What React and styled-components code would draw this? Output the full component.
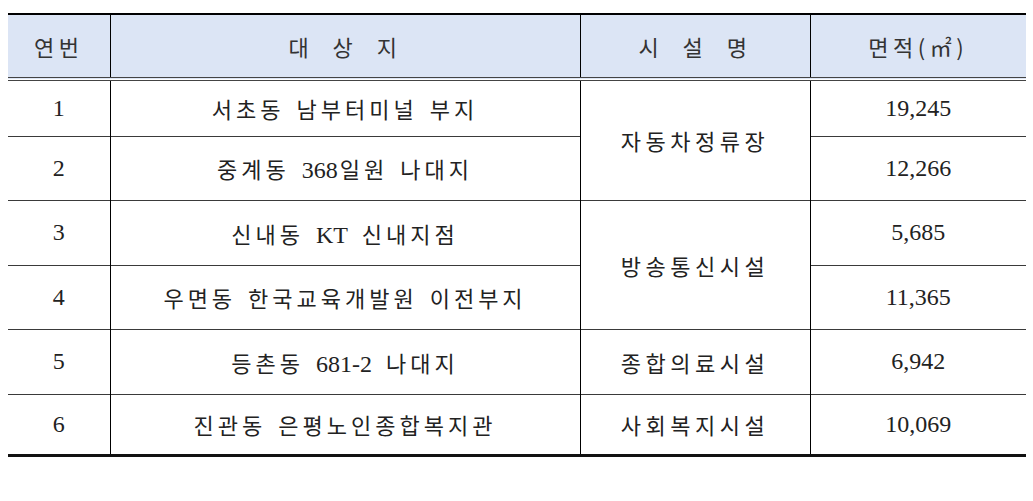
import React from 'react';
import styled, { createGlobalStyle } from 'styled-components';

const GlobalStyle = createGlobalStyle`
  html, body {
    margin: 0;
    padding: 0;
    background: #ffffff;
  }
  body {
    padding: 13px 8px 0 8px;
  }
`;

const sites = [
  { no: '1', name: '서초동 남부터미널 부지', facility: '자동차정류장', span: 2, area: '19,245', height: 57 },
  { no: '2', name: '중계동 368일원 나대지', area: '12,266', height: 64 },
  { no: '3', name: '신내동 KT 신내지점', facility: '방송통신시설', span: 2, area: '5,685', height: 65 },
  { no: '4', name: '우면동 한국교육개발원 이전부지', area: '11,365', height: 64 },
  { no: '5', name: '등촌동 681-2 나대지', facility: '종합의료시설', span: 1, area: '6,942', height: 65 },
  { no: '6', name: '진관동 은평노인종합복지관', facility: '사회복지시설', span: 1, area: '10,069', height: 61 },
];

const Table = styled.table`
  width: 1018px;
  table-layout: fixed;
  border-collapse: collapse;
  border-top: 2px solid #000;
  border-bottom: 3px solid #111;
`;

const HeadCell = styled.th`
  height: 62px;
  padding: 0;
  background: #dce5f5;
  color: #333;
  font-family: 'Noto Sans CJK KR', 'Noto Sans', sans-serif;
  font-size: 22px;
  font-weight: 400;
  letter-spacing: 4.5px;
  word-spacing: 10px;
  text-align: center;
  vertical-align: middle;
  border-bottom: 4px double #444;
  border-left: ${(p) => (p.$first ? 'none' : '1px solid #000')};
`;

const Row = styled.tr`
  height: ${(p) => p.$h}px;
`;

const Cell = styled.td`
  padding: 0;
  text-align: center;
  vertical-align: middle;
  color: #222;
  border-top: 1px solid #3a3a3a;
  border-left: ${(p) => (p.$first ? 'none' : '1px solid #000')};
  font-family: ${(p) =>
    p.$num
      ? "'Liberation Serif', 'Noto Sans CJK KR', serif"
      : "'Noto Sans CJK KR', 'Noto Sans', sans-serif"};
  font-size: ${(p) => (p.$num ? '24px' : '22px')};
  letter-spacing: ${(p) => (p.$num ? '0' : p.$tight ? '4px' : '4.5px')};
  word-spacing: ${(p) => (p.$num ? '0' : '3px')};
`;

const Latin = styled.span`
  font-family: 'Liberation Serif', serif;
  font-size: 24px;
  letter-spacing: 0;
  margin-right: 2px;
`;

const Name = ({ text }) =>
  text.split(/([0-9A-Za-z-]+)/).map((part, i) =>
    /^[0-9A-Za-z-]+$/.test(part) ? <Latin key={i}>{part}</Latin> : <React.Fragment key={i}>{part}</React.Fragment>
  );

export default function App() {
  return (
    <>
      <GlobalStyle />
      <Table>
        <colgroup>
          <col style={{ width: 102 }} />
          <col style={{ width: 470 }} />
          <col style={{ width: 230 }} />
          <col style={{ width: 216 }} />
        </colgroup>
        <thead>
          <tr>
            <HeadCell $first>연번</HeadCell>
            <HeadCell>대 상 지</HeadCell>
            <HeadCell>시 설 명</HeadCell>
            <HeadCell>면적(㎡)</HeadCell>
          </tr>
        </thead>
        <tbody>
          {sites.map((s) => (
            <Row key={s.no} $h={s.height}>
              <Cell $first $num>{s.no}</Cell>
              <Cell $tight><Name text={s.name} /></Cell>
              {s.facility && <Cell rowSpan={s.span}>{s.facility}</Cell>}
              <Cell $num>{s.area}</Cell>
            </Row>
          ))}
        </tbody>
      </Table>
    </>
  );
}
